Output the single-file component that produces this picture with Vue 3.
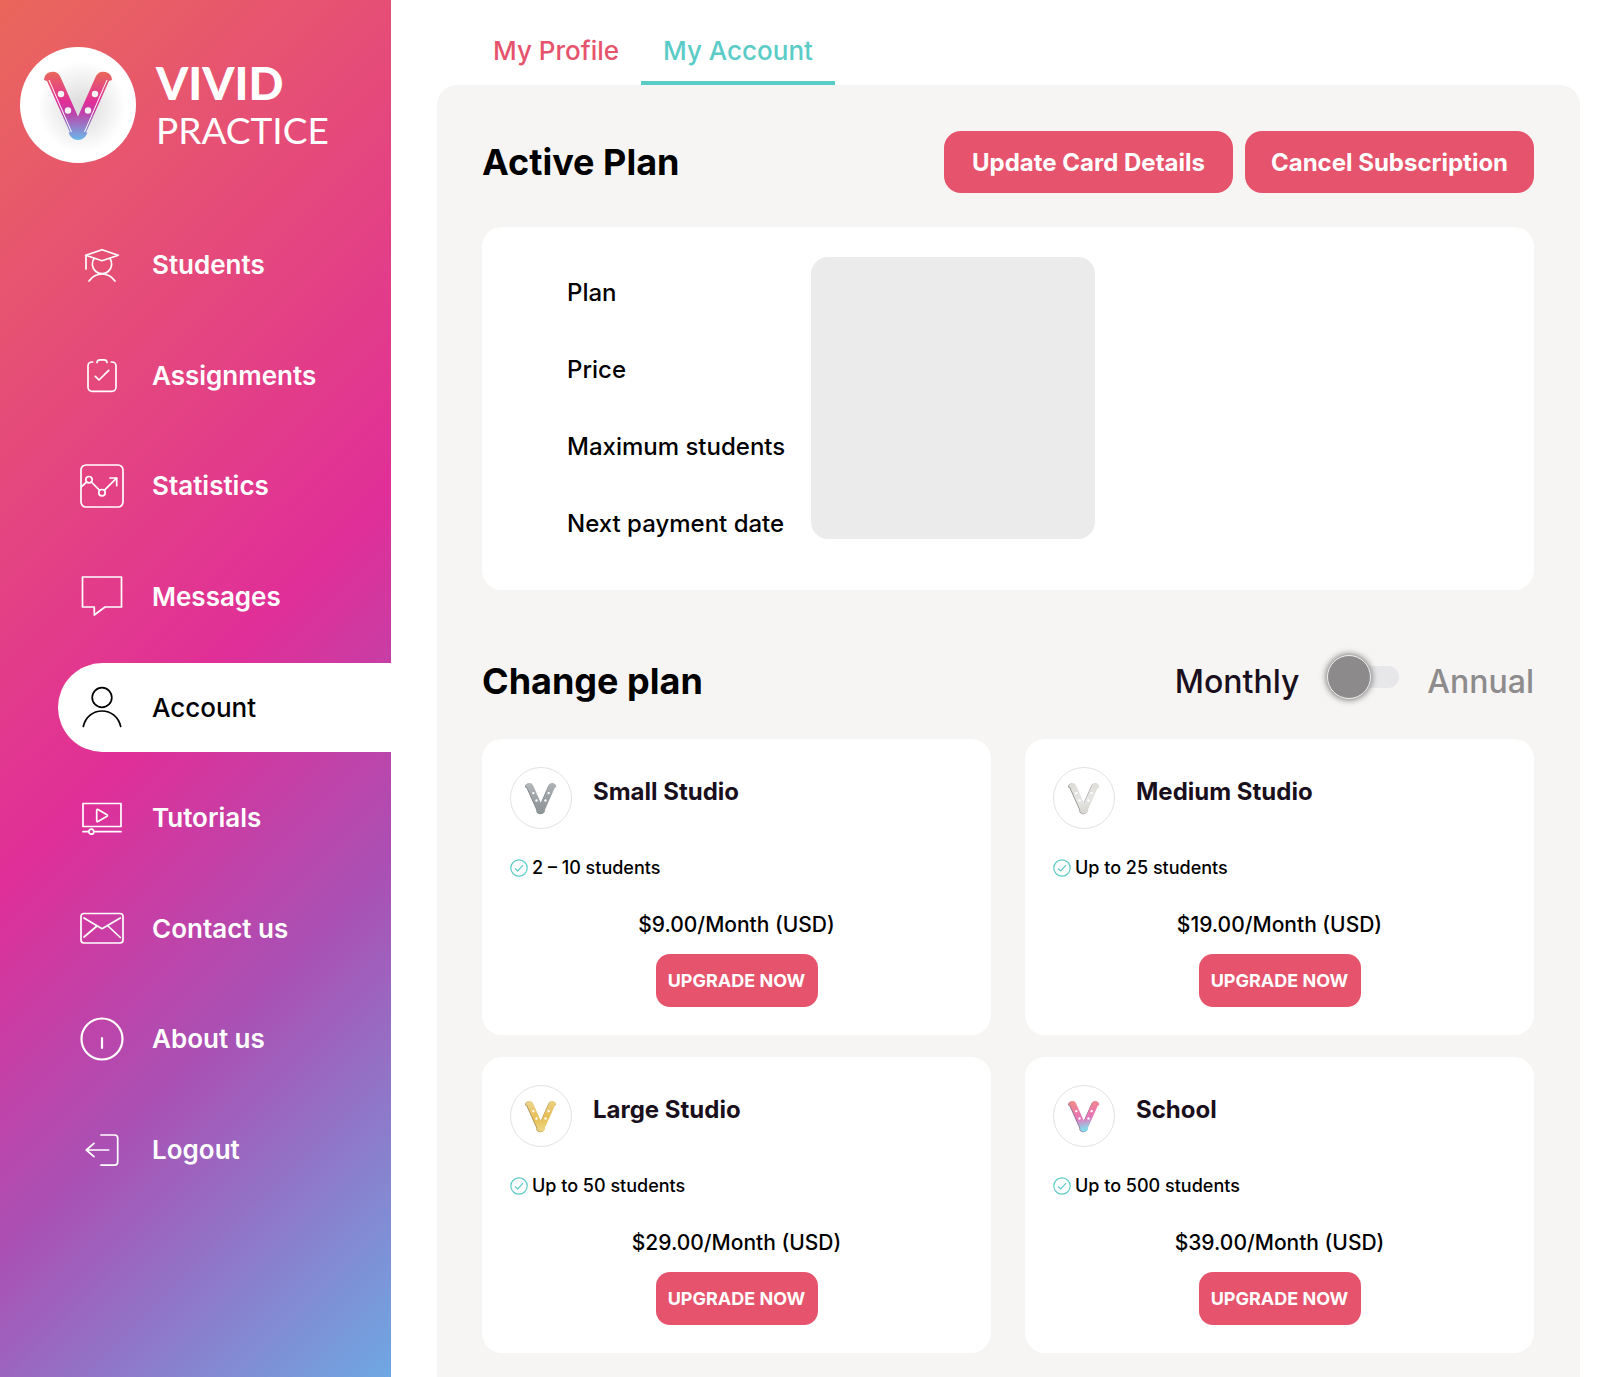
<script setup>
import { ref } from 'vue'

const navItems = [
  {
    label: 'Students',
    paths: [
      'M-16.3 -9.7 0 -15.3 16.3 -9.7 0 -4.3Z',
      'M-16 -9.5V4',
      'M-8 -6.5A9.7 9.7 0 1 0 8 -6.5',
      'M-13 16Q-8 9 0 9Q8 9 13 16',
    ],
  },
  {
    label: 'Assignments',
    paths: [
      'M-9.3 -13H-10a4 4 0 0 0-4 4V12.3a4 4 0 0 0 4 4H10a4 4 0 0 0 4-4V-9a4 4 0 0 0-4-4H9.3',
      'M-5 -12.5q0 -2.7 3 -2.7h4q3 0 3 2.7',
      'M-6.7 1.3-3 5 6.7 -4.7',
    ],
  },
  {
    label: 'Statistics',
    paths: [
      'M-16 -21H16a5 5 0 0 1 5 5V16a5 5 0 0 1-5 5H-16a5 5 0 0 1-5-5V-16a5 5 0 0 1 5-5Z',
      'M-16.2 -6.3a3.2 3.2 0 1 0 6.4 0a3.2 3.2 0 1 0-6.4 0',
      'M-3.2 6.7a3.2 3.2 0 1 0 6.4 0a3.2 3.2 0 1 0-6.4 0',
      'M-20.5 .7-15.3 -4M-10.7 -4-2.3 4.4M2.3 4.4 14.5 -7.8',
      'M8 -8H14.7V-.3',
    ],
  },
  { label: 'Messages', paths: ['M-19.5 -19H19.5V11H3L-7.7 19V11H-19.5Z'] },
  {
    label: 'Account',
    active: true,
    paths: [
      'M-9.8 -9.5a9.8 9.8 0 1 0 19.6 0a9.8 9.8 0 1 0-19.6 0',
      'M-18.7 19.5C-16.5 10-9 4 0 4S16.5 10 18.7 19.5',
    ],
  },
  {
    label: 'Tutorials',
    paths: [
      'M-19 -14.5H19V8.5H-19Z',
      'M-5.3 -7.6q0 -1.4 1.3 -.8L5 -3.2q1 .7 0 1.4L-4 3.4q-1.3 .6-1.3 -.8Z',
      'M-19 13.7H-13.2M-8.2 13.7H19',
      'M-13.2 13.7a2.5 2.5 0 1 0 5 0a2.5 2.5 0 1 0-5 0',
    ],
  },
  {
    label: 'Contact us',
    paths: [
      'M-18 -14.5H18a3 3 0 0 1 3 3V12a3 3 0 0 1-3 3H-18a3 3 0 0 1-3-3V-11.5a3 3 0 0 1 3-3Z',
      'M-18 -10 0 .7 18.3 -10',
      'M-5 -2-18 9M6 -2 18.3 9.5',
    ],
  },
  {
    label: 'About us',
    bold: true,
    paths: ['M-20.5 0a20.5 20.5 0 1 0 41 0a20.5 20.5 0 1 0-41 0', 'M0 -1V9'],
  },
  {
    label: 'Logout',
    paths: ['M-1 -15H12.5a3.2 3.2 0 0 1 3.2 3.2V12a3.2 3.2 0 0 1-3.2 3.2H-1', 'M6.7 0H-15.7M-8 -6.7-15.7 0-8 6.7'],
  },
]

const planFields = ['Plan', 'Price', 'Maximum students', 'Next payment date']

const plans = [
  { id: 'small', name: 'Small Studio', limit: '2 – 10 students', price: '$9.00', colors: ['#b4b8bb', '#9a9fa3', '#8f969a'], edge: '#7a8084' },
  { id: 'medium', name: 'Medium Studio', limit: 'Up to 25 students', price: '$19.00', colors: ['#dedcd6', '#e6e6e4', '#d9d8d2'], edge: '#8d8d8d' },
  { id: 'large', name: 'Large Studio', limit: 'Up to 50 students', price: '$29.00', colors: ['#ecd28a', '#e8bf55', '#ecd27c'], edge: '#a58a4a' },
  { id: 'school', name: 'School', limit: 'Up to 500 students', price: '$39.00', colors: ['#f08a86', '#e874b8', '#86d8ea'], edge: '#8a6a90' },
]

const vShape =
  'M-34 -25A8.6 8.6 0 0 1-18 -29L0 11.5 18 -29A8.6 8.6 0 0 1 34 -25L31 -24 8 27.5H9.5C8 32 4.5 35 0 35S-8 32-9.5 27.5H-8L-31 -24Z'
const rivets = [[-17, -11], [-10, 5.5], [10, 5.5], [17, -11]]

const annual = ref(false)
</script>

<template>
  <div class="app">
    <aside class="sidebar">
      <a class="brand" href="#">
        <svg class="brand-mark" viewBox="-58 -58 116 116" aria-hidden="true">
          <defs>
            <linearGradient id="brand-v" gradientUnits="userSpaceOnUse" x1="0" y1="-34" x2="0" y2="35">
              <stop offset="0" stop-color="#ea6a58" />
              <stop offset=".45" stop-color="#e02f98" />
              <stop offset=".6" stop-color="#c040a8" />
              <stop offset="1" stop-color="#68b8ea" />
            </linearGradient>
            <radialGradient id="brand-glow">
              <stop offset="0" stop-color="#d9d9d9" />
              <stop offset=".5" stop-color="#ececec" />
              <stop offset="1" stop-color="#fff" />
            </radialGradient>
          </defs>
          <circle r="58" fill="#fff" />
          <ellipse cx="4" cy="2" rx="44" ry="46" fill="url(#brand-glow)" />
          <path :d="vShape" fill="url(#brand-v)" />
          <path d="M-29 -25-6.5 27M29 -25 6.5 27" stroke="#fff" stroke-width="1" fill="none" />
          <circle v-for="(r, i) in rivets" :key="i" :cx="r[0]" :cy="r[1]" r="3.2" fill="#f4f4f4" />
        </svg>
        <span class="brand-name"><strong>VIVID</strong><span>PRACTICE</span></span>
      </a>

      <nav>
        <ul class="nav-list">
          <li v-for="item in navItems" :key="item.label">
            <a class="nav-link" :class="{ active: item.active }" href="#">
              <svg class="nav-icon" :class="{ bold: item.bold }" viewBox="-22 -22 44 44" aria-hidden="true">
                <path v-for="d in item.paths" :key="d" :d="d" />
              </svg>
              {{ item.label }}
            </a>
          </li>
        </ul>
      </nav>
    </aside>

    <main class="main">
      <nav class="tabs">
        <a class="tab" href="#">My Profile</a>
        <a class="tab current" href="#">My Account</a>
      </nav>

      <div class="panel">
        <header class="section-head">
          <h2>Active Plan</h2>
          <div class="actions">
            <button class="btn" type="button">Update Card Details</button>
            <button class="btn" type="button">Cancel Subscription</button>
          </div>
        </header>

        <section class="card details">
          <ul class="fields">
            <li v-for="f in planFields" :key="f">{{ f }}</li>
          </ul>
          <div class="values"></div>
        </section>

        <header class="section-head change">
          <h2>Change plan</h2>
          <label class="period">
            <span :class="{ off: annual }">Monthly</span>
            <input v-model="annual" class="switch" type="checkbox" role="switch" />
            <span :class="{ off: !annual }">Annual</span>
          </label>
        </header>

        <section class="plans">
          <article v-for="p in plans" :key="p.id" class="card plan">
            <div class="plan-head">
              <svg class="badge" viewBox="-31 -31 62 62" aria-hidden="true">
                <defs>
                  <linearGradient :id="'v-' + p.id" gradientUnits="userSpaceOnUse" x1="-8" y1="-34" x2="4" y2="35">
                    <stop offset="0" :stop-color="p.colors[0]" />
                    <stop offset=".55" :stop-color="p.colors[1]" />
                    <stop offset=".9" :stop-color="p.colors[2]" />
                  </linearGradient>
                </defs>
                <circle r="30.5" fill="#fff" stroke="#e2e2e2" />
                <g transform="scale(.45)">
                  <path :d="vShape" :fill="p.edge" transform="translate(-1.5 1)" />
                  <path :d="vShape" :fill="`url(#v-${p.id})`" />
                  <circle v-for="(r, i) in rivets" :key="i" :cx="r[0]" :cy="r[1]" r="2.6" fill="#fff" />
                </g>
              </svg>
              <h3>{{ p.name }}</h3>
            </div>
            <p class="limit">
              <svg class="tick" viewBox="0 0 18 18" aria-hidden="true">
                <circle cx="9" cy="9" r="8.2" />
                <path d="M5 9.5 7.7 12 13 6.2" />
              </svg>
              {{ p.limit }}
            </p>
            <p class="price">{{ p.price }}/Month (USD)</p>
            <button class="btn small" type="button">UPGRADE NOW</button>
          </article>
        </section>
      </div>
    </main>
  </div>
</template>

<style>
body {
  margin: 0;
  background: #fff;
}
</style>

<style scoped>
.app {
  display: flex;
  min-height: 100vh;
  font-family: Inter, sans-serif;
  color: #000;
}
a {
  color: inherit;
  text-decoration: none;
}
ul {
  list-style: none;
  margin: 0;
  padding: 0;
}
h2,
h3,
p {
  margin: 0;
}

.sidebar {
  flex: none;
  width: 391px;
  background: linear-gradient(135deg, #ea675b 0%, #e02f98 50%, #aa50b4 71%, #6ea8e2 100%);
  color: #fff;
}
.brand {
  display: flex;
  align-items: center;
  gap: 20px;
  padding: 47px 20px 57px;
}
.brand-mark {
  width: 116px;
  height: 116px;
}
.brand-name {
  display: flex;
  flex-direction: column;
  padding-top: 2px;
  font-family: Lato, sans-serif;
  font-size: 37px;
  line-height: 47px;
}
.brand-name strong {
  font-size: 46px;
  font-weight: 900;
}
.nav-list {
  display: flex;
  flex-direction: column;
  justify-content: space-between;
  min-height: 974px;
  padding-left: 58px;
}
.nav-link {
  display: flex;
  align-items: center;
  gap: 28px;
  height: 89px;
  padding-left: 22px;
  border-radius: 45px 0 0 45px;
  font-size: 26px;
  font-weight: 600;
}
.nav-link.active {
  background: #fff;
  color: #000;
  font-weight: 500;
}
.nav-icon {
  flex: none;
  width: 44px;
  height: 44px;
  fill: none;
  stroke: currentColor;
  stroke-width: 1.7;
  stroke-linecap: round;
  stroke-linejoin: round;
}
.nav-icon.bold {
  stroke-width: 2.2;
}

.main {
  flex: 1;
  display: flex;
  flex-direction: column;
  padding: 0 20px 0 46px;
}
.tabs {
  display: flex;
  padding-left: 34px;
}
.tab {
  padding: 16px 22px 0;
  height: 65px;
  border-bottom: 4px solid transparent;
  font-size: 26px;
  font-weight: 500;
  line-height: 69px;
  color: #e6536c;
}
.tab.current {
  color: #5bcbc7;
  border-color: #5bcbc7;
}
.panel {
  flex: 1;
  padding: 46px 46px 24px 45px;
  border-radius: 20px 20px 0 0;
  background: #f6f5f3;
}
.section-head {
  display: flex;
  align-items: center;
  justify-content: space-between;
  margin-bottom: 34px;
}
.section-head h2 {
  font-size: 36px;
  font-weight: 700;
  line-height: 50px;
}
.actions {
  display: flex;
  gap: 12px;
}
.btn {
  width: 289px;
  height: 62px;
  padding: 0;
  border: 0;
  border-radius: 17px;
  background: #e6536c;
  color: #fff;
  font-family: inherit;
  font-size: 24px;
  font-weight: 700;
}
.card {
  border-radius: 20px;
  background: #fff;
}
.details {
  display: flex;
  padding: 30px 30px 48px 85px;
}
.fields {
  display: flex;
  flex-direction: column;
  gap: 41px;
  width: 244px;
  padding-top: 18px;
  font-size: 24px;
  font-weight: 500;
  line-height: 36px;
  white-space: nowrap;
}
.values {
  width: 284px;
  height: 282px;
  border-radius: 17px;
  background: #ebebeb;
}

.change {
  margin-top: 66px;
  margin-bottom: 33px;
}
.period {
  display: flex;
  align-items: center;
  color: #1a0f1c;
  font-size: 32px;
  font-weight: 500;
}
.off {
  color: #8d8b8c;
}
.switch {
  appearance: none;
  position: relative;
  width: 72px;
  height: 22px;
  margin: 0 28px 8px;
  border-radius: 11px;
  background: #e7e7ea;
}
.switch::before {
  content: '';
  position: absolute;
  top: -11px;
  left: 0;
  box-sizing: border-box;
  width: 44px;
  height: 44px;
  border: 1px solid #f2f2f2;
  border-radius: 50%;
  background: #8c8a8b;
  box-shadow: 0 0 6px 1px #777;
}
.switch:checked::before {
  left: 28px;
}

.plans {
  display: grid;
  grid-template-columns: 1fr 1fr;
  gap: 22px 34px;
}
.plan {
  display: flex;
  flex-direction: column;
  align-items: center;
  padding: 28px;
}
.plan-head {
  display: flex;
  align-self: stretch;
  gap: 21px;
}
.badge {
  width: 62px;
  height: 62px;
}
.plan h3 {
  color: #1a0f1c;
  font-size: 24px;
  font-weight: 700;
  line-height: 50px;
}
.limit {
  display: flex;
  align-self: stretch;
  align-items: center;
  gap: 4px;
  margin: 28px 0 31px;
  font-size: 18px;
  font-weight: 500;
  line-height: 22px;
}
.tick {
  width: 18px;
  height: 18px;
  fill: none;
  stroke: #5bcbc7;
  stroke-width: 1.2;
}
.price {
  margin-bottom: 14px;
  font-size: 21px;
  font-weight: 500;
  line-height: 30px;
}
.btn.small {
  width: 162px;
  height: 53px;
  border-radius: 14px;
  font-size: 18px;
}
</style>
